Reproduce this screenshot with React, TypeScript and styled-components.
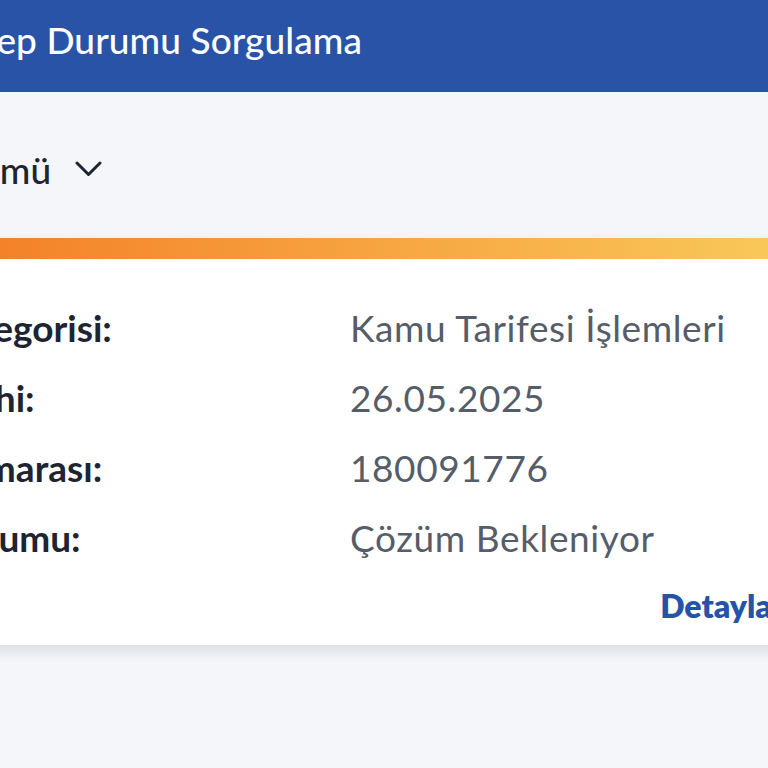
import styled, { createGlobalStyle } from "styled-components";

const GlobalStyle = createGlobalStyle`
  html, body {
    margin: 0;
    padding: 0;
    background: #f4f6f9;
  }
  body {
    font-family: Lato, "Noto Sans", "Liberation Sans", sans-serif;
  }
`;

// Viewport crops the zoomed-in screen on both sides
const Viewport = styled.div`
  width: 768px;
  height: 768px;
  overflow: hidden;
  background: #f4f6f9;
`;

const Screen = styled.div`
  width: 1113px;
  margin-left: -240px;
  display: flex;
  flex-direction: column;
`;

const Header = styled.header`
  height: 92px;
  background: #2953a7;
  display: flex;
  align-items: center;
  padding: 0 0 14px 191px;
  box-sizing: border-box;
`;

const Title = styled.h1`
  margin: 0;
  color: #ffffff;
  font-size: 37px;
  font-weight: 500;
  letter-spacing: 0.1px;
`;

const FilterRow = styled.div`
  height: 146px;
  display: flex;
  align-items: center;
  gap: 24px;
  padding: 8px 0 0 201px;
  box-sizing: border-box;
`;

const FilterLabel = styled.span`
  font-size: 37px;
  font-weight: 500;
  color: #1f2530;
`;

const Card = styled.section`
  margin: 0 40px;
  background: #ffffff;
  box-shadow: 0 6px 12px rgba(30, 40, 60, 0.12);
`;

const AccentBar = styled.div`
  height: 21px;
  background: linear-gradient(90deg, #f26f1c 0%, #f7a440 55%, #f9cd5c 100%);
`;

const CardBody = styled.div`
  padding: 34px 49px 14px 40px;
  display: flex;
  flex-direction: column;
`;

const Row = styled.div`
  display: grid;
  grid-template-columns: 510px 1fr;
  height: 70px;
  line-height: 70px;
  font-size: 37px;
`;

const Label = styled.span`
  font-weight: 700;
  color: #1e2430;
`;

const Value = styled.span`
  font-weight: 400;
  color: #555d69;
  letter-spacing: 0.6px;
`;

const Footer = styled.div`
  margin-top: 8px;
  display: flex;
  justify-content: flex-end;
`;

const DetailLink = styled.a`
  font-size: 32px;
  font-weight: 800;
  line-height: 50px;
  color: #2553a8;
  text-decoration: none;
`;

const Chevron = () => (
  <svg width="27" height="16" viewBox="0 0 27 16" fill="none">
    <path
      d="M2 2 L13.5 13.5 L25 2"
      stroke="#1f2530"
      strokeWidth="3"
      strokeLinecap="round"
      strokeLinejoin="round"
    />
  </svg>
);

const rows = [
  { label: "Talep Kategorisi:", value: "Kamu Tarifesi İşlemleri" },
  { label: "Talep Tarihi:", value: "26.05.2025" },
  { label: "Talep Numarası:", value: "180091776" },
  { label: "Talep Durumu:", value: "Çözüm Bekleniyor" },
];

const App = () => {
  return (
    <Viewport>
      <GlobalStyle />
      <Screen>
        <Header>
          <Title>Talep Durumu Sorgulama</Title>
        </Header>
        <FilterRow>
          <FilterLabel>Tümü</FilterLabel>
          <Chevron />
        </FilterRow>
        <Card>
          <AccentBar />
          <CardBody>
            {rows.map((r) => (
              <Row key={r.label}>
                <Label>{r.label}</Label>
                <Value>{r.value}</Value>
              </Row>
            ))}
            <Footer>
              <DetailLink href="#">Detaylar</DetailLink>
            </Footer>
          </CardBody>
        </Card>
      </Screen>
    </Viewport>
  );
};

export default App;
